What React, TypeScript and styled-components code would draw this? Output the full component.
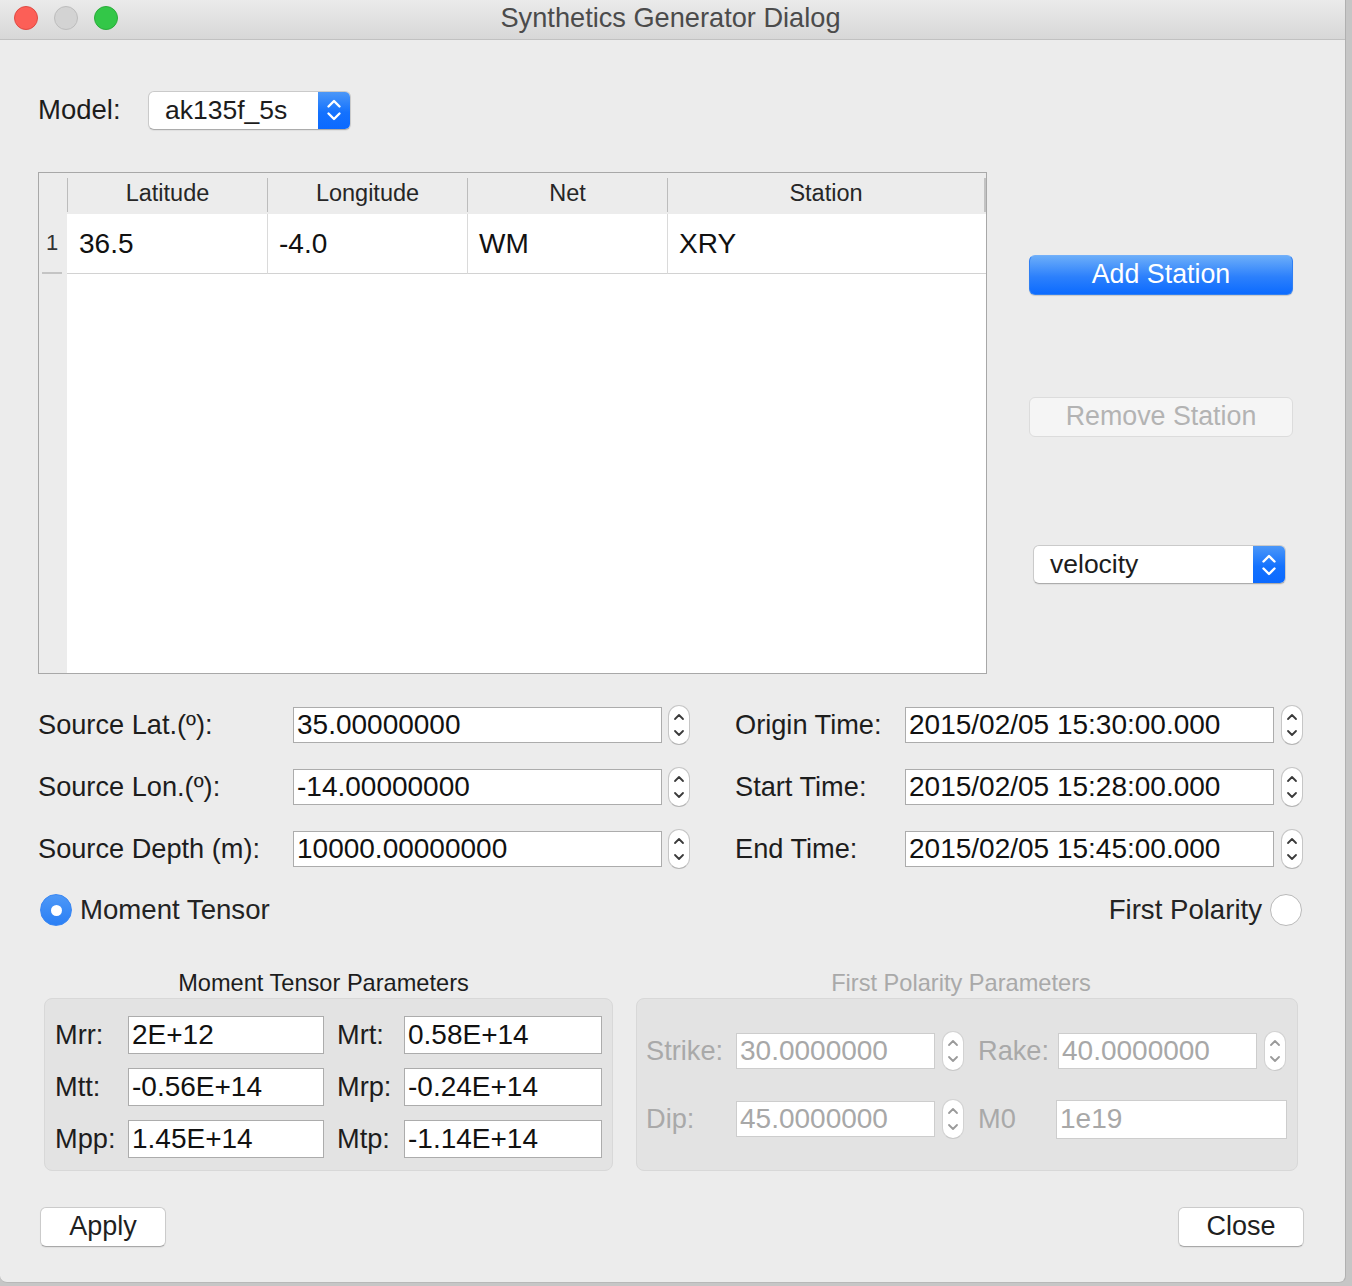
import React from "react";
import styled, { createGlobalStyle } from "styled-components";

const FONT = `"Liberation Sans", Arial, Helvetica, sans-serif`;

const GlobalStyle = createGlobalStyle`
  html, body { margin: 0; padding: 0; }
  body {
    width: 1352px;
    height: 1286px;
    overflow: hidden;
    background: #c8c8c8;
    font-family: ${FONT};
  }
  * { box-sizing: border-box; }
`;

const Screen = styled.div`
  width: 1352px;
  height: 1286px;
  display: flex;
  align-items: flex-start;
  background: #c6c6c6;
`;

const Window = styled.div`
  width: 1346px;
  height: 1283px;
  background: #ececec;
  border-right: 1px solid #b0b0b0;
  border-bottom: 1px solid #b8b8b8;
  border-radius: 0 0 7px 7px;
  display: flex;
  flex-direction: column;
  overflow: hidden;
`;

const TitleBar = styled.div`
  height: 40px;
  flex: none;
  display: grid;
  grid-template-columns: 1fr auto 1fr;
  align-items: center;
  background: linear-gradient(#ebebeb, #d7d7d7);
  border-bottom: 1px solid #c1c1c1;
`;

const Lights = styled.div`
  display: flex;
  gap: 16px;
  padding-left: 14px;
  padding-bottom: 4px;
`;

const Light = styled.span<{ $fill: string; $edge: string }>`
  width: 24px;
  height: 24px;
  border-radius: 50%;
  background: ${(p) => p.$fill};
  border: 1px solid ${(p) => p.$edge};
`;

const Title = styled.div`
  font-size: 27.2px;
  color: #4b4b4b;
  padding-bottom: 3px;
  padding-right: 4px;
`;

const Body = styled.div`
  flex: 1;
  display: flex;
  flex-direction: column;
  padding: 51px 0 0 38px;
`;

const ModelRow = styled.div`
  display: flex;
  align-items: center;
  height: 38px;
`;

const ModelLabel = styled.span`
  width: 110px;
  font-size: 27.5px;
  color: #1c1c1c;
`;

const Combo = styled.div<{ $width: number; $mt?: number; $ml?: number }>`
  width: ${(p) => p.$width}px;
  height: 39px;
  margin-top: ${(p) => p.$mt ?? 0}px;
  margin-left: ${(p) => p.$ml ?? 0}px;
  display: flex;
  border-radius: 6px;
  background: #fff;
  border: 1px solid #cacaca;
  border-bottom-color: #acacac;
  box-shadow: 0 1px 1px rgba(0, 0, 0, 0.06);
  overflow: hidden;
`;

const ComboText = styled.span`
  flex: 1;
  display: flex;
  align-items: center;
  padding-left: 16px;
  font-size: 26.5px;
  color: #1c1c1c;
`;

const ComboArrow = styled.span`
  width: 32px;
  display: flex;
  align-items: center;
  justify-content: center;
  background: linear-gradient(#4b97f8, #1472fe 55%, #0b69ff);
`;

const StationSection = styled.div`
  display: flex;
  gap: 42px;
  margin-top: 43px;
`;

const COLS = "28px 200px 200px 200px 1fr";

const Table = styled.div`
  width: 949px;
  height: 502px;
  border: 1px solid #a8a8a8;
  display: flex;
  flex-direction: column;
  background: #ececec;
`;

const HeaderRow = styled.div`
  display: grid;
  grid-template-columns: ${COLS};
  height: 41px;
  background: #ececec;
`;

const HeaderCell = styled.div<{ $sep?: boolean; $last?: boolean }>`
  display: flex;
  align-items: center;
  justify-content: center;
  margin: 5px 0 2px;
  font-size: 23.5px;
  color: #262626;
  border-left: ${(p) => (p.$sep ? "1.5px solid #bcbcbc" : "none")};
  border-right: ${(p) => (p.$last ? "2px solid #c2c2c2" : "none")};
  padding-bottom: 3px;
`;

const DataRow = styled.div`
  display: grid;
  grid-template-columns: ${COLS};
  height: 60px;
  background: #ececec;
`;

const RowHeaderCell = styled.div`
  margin: 0 5px 0 3px;
  display: flex;
  align-items: center;
  justify-content: center;
  font-size: 22px;
  color: #333;
  border-bottom: 2px solid #c4c4c4;
`;

const DataCell = styled.div<{ $first?: boolean }>`
  background: #fff;
  display: flex;
  align-items: center;
  padding-left: ${(p) => (p.$first ? 12 : 11)}px;
  font-size: 28px;
  color: #111;
  border-left: ${(p) => (p.$first ? "none" : "1px solid #dadada")};
  border-bottom: 1px solid #d2d2d2;
`;

const Filler = styled.div`
  flex: 1;
  display: grid;
  grid-template-columns: 28px 1fr;
`;

const FillerGutter = styled.div`
  background: #ececec;
`;

const FillerArea = styled.div`
  background: #fff;
`;

const SideColumn = styled.div`
  display: flex;
  flex-direction: column;
  align-items: flex-start;
  padding-top: 83px;
`;

const PrimaryButton = styled.button`
  width: 264px;
  height: 40px;
  border-radius: 6px;
  border: 1px solid #2f7ff3;
  border-top-color: #73b0fa;
  background: linear-gradient(#6badf9, #2c80fc 55%, #0c6bff);
  color: #fff;
  font-family: ${FONT};
  font-size: 26.8px;
  padding: 0 0 2px;
  box-shadow: 0 1px 1px rgba(0, 0, 0, 0.15);
`;

const DisabledButton = styled.button`
  width: 264px;
  height: 40px;
  margin-top: 102px;
  border-radius: 6px;
  border: 1px solid #dcdcdc;
  background: #f5f5f5;
  color: #b3b3b3;
  font-family: ${FONT};
  font-size: 26.8px;
  padding: 0 0 2px;
`;

const FormSection = styled.div`
  display: flex;
  gap: 45px;
  margin-top: 31px;
`;

const FieldGrid = styled.div<{ $labelWidth: number }>`
  display: grid;
  grid-template-columns: ${(p) => p.$labelWidth}px auto;
  row-gap: 22px;
  align-items: center;
`;

const FieldLabel = styled.span<{ $disabled?: boolean; $indent?: number }>`
  font-size: 27.2px;
  color: ${(p) => (p.$disabled ? "#a9a9a9" : "#1d1d1d")};
  padding-left: ${(p) => p.$indent ?? 0}px;
  white-space: nowrap;
`;

const SpinField = styled.div<{ $gap: number }>`
  display: flex;
  align-items: center;
  gap: ${(p) => p.$gap}px;
`;

const TextInput = styled.input<{ $width: number; $height?: number; $disabled?: boolean }>`
  width: ${(p) => p.$width}px;
  height: ${(p) => p.$height ?? 36}px;
  border: 1px solid ${(p) => (p.$disabled ? "#cdcdcd" : "#acacac")};
  background: #fff;
  border-radius: 0;
  padding: 0 3px;
  font-family: ${FONT};
  font-size: 28px;
  color: ${(p) => (p.$disabled ? "#a8a8a8" : "#111")};
  outline: none;
`;

const SpinnerBox = styled.span<{ $disabled?: boolean }>`
  width: 22px;
  height: 40px;
  flex: none;
  display: flex;
  justify-content: center;
  border-radius: 11px;
  background: #fff;
  border: 1px solid ${(p) => (p.$disabled ? "#d2d2d2" : "#c6c6c6")};
  border-bottom-color: ${(p) => (p.$disabled ? "#c8c8c8" : "#b4b4b4")};
`;

const RadioRow = styled.div`
  width: 1266px;
  display: flex;
  justify-content: space-between;
  align-items: center;
  margin-top: 25px;
  padding: 0 2px;
`;

const RadioOption = styled.label`
  display: flex;
  align-items: center;
  gap: 8px;
  font-size: 27.6px;
  color: #232323;
`;

const RadioDot = styled.span<{ $checked?: boolean }>`
  width: 32px;
  height: 32px;
  border-radius: 50%;
  display: flex;
  align-items: center;
  justify-content: center;
  background: ${(p) => (p.$checked ? "linear-gradient(#4d98f7, #2a7ff5)" : "#fff")};
  border: 1px solid ${(p) => (p.$checked ? "#3a87f3" : "#b9b9b9")};
`;

const RadioInner = styled.span`
  width: 11px;
  height: 11px;
  border-radius: 50%;
  background: #fff;
`;

const GroupsRow = styled.div`
  display: flex;
  gap: 23px;
  margin-top: 45px;
  padding-left: 6px;
`;

const Group = styled.div<{ $width: number }>`
  width: ${(p) => p.$width}px;
  display: flex;
  flex-direction: column;
  gap: 3px;
`;

const GroupTitle = styled.div<{ $disabled?: boolean }>`
  height: 24px;
  line-height: 24px;
  text-align: center;
  font-size: 23.6px;
  color: ${(p) => (p.$disabled ? "#a9a9a9" : "#1d1d1d")};
  padding-right: ${(p) => (p.$disabled ? 12 : 10)}px;
  white-space: nowrap;
`;

const GroupBox = styled.div`
  height: 173px;
  background: #e3e3e3;
  border: 1px solid #d8d8d8;
  border-radius: 8px;
`;

const MomentGrid = styled(GroupBox)`
  display: grid;
  grid-template-columns: 73px 196px 80px 198px;
  grid-auto-rows: 38px;
  row-gap: 14px;
  align-items: center;
  padding: 17px 10px 0;
`;

const PolarityGrid = styled(GroupBox)`
  display: grid;
  grid-template-columns: 90px 228px 94px 230px;
  grid-auto-rows: 40px;
  row-gap: 28px;
  align-items: center;
  padding: 32px 9px 0;
`;

const ButtonsRow = styled.div`
  width: 1266px;
  display: flex;
  justify-content: space-between;
  margin-top: 36px;
  padding-left: 2px;
`;

const PushButton = styled.button`
  width: 126px;
  height: 40px;
  border-radius: 6px;
  background: #fff;
  border: 1px solid #cbcbcb;
  border-bottom-color: #a9a9a9;
  box-shadow: 0 1px 1px rgba(0, 0, 0, 0.06);
  font-family: ${FONT};
  font-size: 27px;
  color: #1f1f1f;
  padding: 0 0 2px;
`;

const ComboChevrons = () => (
  <svg width="32" height="38" viewBox="0 0 32 38" fill="none">
    <path d="M10.5 15.5 L16 10 L21.5 15.5" stroke="#fff" strokeWidth="2.4" strokeLinecap="round" strokeLinejoin="round" />
    <path d="M10.5 22.5 L16 28 L21.5 22.5" stroke="#fff" strokeWidth="2.4" strokeLinecap="round" strokeLinejoin="round" />
  </svg>
);

const Spinner = ({ disabled }: { disabled?: boolean }) => (
  <SpinnerBox $disabled={disabled}>
    <svg width="20" height="38" viewBox="0 0 20 38" fill="none">
      <path
        d="M6 13 L10 9 L14 13"
        stroke={disabled ? "#9a9a9a" : "#3a3a3a"}
        strokeWidth="1.8"
        strokeLinecap="round"
        strokeLinejoin="round"
      />
      <path
        d="M6 25 L10 29 L14 25"
        stroke={disabled ? "#9a9a9a" : "#3a3a3a"}
        strokeWidth="1.8"
        strokeLinecap="round"
        strokeLinejoin="round"
      />
    </svg>
  </SpinnerBox>
);

const SpinInput = ({
  value,
  width,
  gap = 6,
  disabled,
}: {
  value: string;
  width: number;
  gap?: number;
  disabled?: boolean;
}) => (
  <SpinField $gap={gap}>
    <TextInput readOnly value={value} $width={width} $disabled={disabled} />
    <Spinner disabled={disabled} />
  </SpinField>
);

const sourceFields = [
  ["Source Lat.(º):", "35.00000000"],
  ["Source Lon.(º):", "-14.00000000"],
  ["Source Depth (m):", "10000.00000000"],
];

const timeFields = [
  ["Origin Time:", "2015/02/05 15:30:00.000"],
  ["Start Time:", "2015/02/05 15:28:00.000"],
  ["End Time:", "2015/02/05 15:45:00.000"],
];

const moment = [
  ["Mrr:", "2E+12", "Mrt:", "0.58E+14"],
  ["Mtt:", "-0.56E+14", "Mrp:", "-0.24E+14"],
  ["Mpp:", "1.45E+14", "Mtp:", "-1.14E+14"],
];

export default function App() {
  return (
    <>
      <GlobalStyle />
      <Screen>
        <Window>
          <TitleBar>
            <Lights>
              <Light $fill="#fc5f57" $edge="#df4a43" />
              <Light $fill="#d3d3d3" $edge="#bdbdbd" />
              <Light $fill="#33c748" $edge="#2aac3a" />
            </Lights>
            <Title>Synthetics Generator Dialog</Title>
            <span />
          </TitleBar>
          <Body>
            <ModelRow>
              <ModelLabel>Model:</ModelLabel>
              <Combo $width={203}>
                <ComboText>ak135f_5s</ComboText>
                <ComboArrow>
                  <ComboChevrons />
                </ComboArrow>
              </Combo>
            </ModelRow>

            <StationSection>
              <Table>
                <HeaderRow>
                  <HeaderCell />
                  <HeaderCell $sep>Latitude</HeaderCell>
                  <HeaderCell $sep>Longitude</HeaderCell>
                  <HeaderCell $sep>Net</HeaderCell>
                  <HeaderCell $sep $last>
                    Station
                  </HeaderCell>
                </HeaderRow>
                <DataRow>
                  <RowHeaderCell>1</RowHeaderCell>
                  <DataCell $first>36.5</DataCell>
                  <DataCell>-4.0</DataCell>
                  <DataCell>WM</DataCell>
                  <DataCell>XRY</DataCell>
                </DataRow>
                <Filler>
                  <FillerGutter />
                  <FillerArea />
                </Filler>
              </Table>
              <SideColumn>
                <PrimaryButton>Add Station</PrimaryButton>
                <DisabledButton disabled>Remove Station</DisabledButton>
                <Combo $width={253} $mt={108} $ml={4}>
                  <ComboText>velocity</ComboText>
                  <ComboArrow>
                    <ComboChevrons />
                  </ComboArrow>
                </Combo>
              </SideColumn>
            </StationSection>

            <FormSection>
              <FieldGrid $labelWidth={255}>
                {sourceFields.map(([label, value]) => (
                  <React.Fragment key={label}>
                    <FieldLabel>{label}</FieldLabel>
                    <SpinInput value={value} width={369} gap={6} />
                  </React.Fragment>
                ))}
              </FieldGrid>
              <FieldGrid $labelWidth={170}>
                {timeFields.map(([label, value]) => (
                  <React.Fragment key={label}>
                    <FieldLabel>{label}</FieldLabel>
                    <SpinInput value={value} width={369} gap={7} />
                  </React.Fragment>
                ))}
              </FieldGrid>
            </FormSection>

            <RadioRow>
              <RadioOption>
                <RadioDot $checked>
                  <RadioInner />
                </RadioDot>
                Moment Tensor
              </RadioOption>
              <RadioOption>
                First Polarity
                <RadioDot />
              </RadioOption>
            </RadioRow>

            <GroupsRow>
              <Group $width={569}>
                <GroupTitle>Moment Tensor Parameters</GroupTitle>
                <MomentGrid>
                  {moment.map(([l1, v1, l2, v2]) => (
                    <React.Fragment key={l1}>
                      <FieldLabel>{l1}</FieldLabel>
                      <TextInput readOnly value={v1} $width={196} $height={38} />
                      <FieldLabel $indent={13}>{l2}</FieldLabel>
                      <TextInput readOnly value={v2} $width={198} $height={38} />
                    </React.Fragment>
                  ))}
                </MomentGrid>
              </Group>
              <Group $width={662}>
                <GroupTitle $disabled>First Polarity Parameters</GroupTitle>
                <PolarityGrid>
                  <FieldLabel $disabled>Strike:</FieldLabel>
                  <SpinInput value="30.0000000" width={199} gap={7} disabled />
                  <FieldLabel $disabled $indent={14}>
                    Rake:
                  </FieldLabel>
                  <SpinInput value="40.0000000" width={199} gap={7} disabled />
                  <FieldLabel $disabled>Dip:</FieldLabel>
                  <SpinInput value="45.0000000" width={199} gap={7} disabled />
                  <FieldLabel $disabled $indent={14}>
                    M0
                  </FieldLabel>
                  <TextInput readOnly value="1e19" $width={231} $height={39} $disabled style={{ marginLeft: -2 }} />
                </PolarityGrid>
              </Group>
            </GroupsRow>

            <ButtonsRow>
              <PushButton>Apply</PushButton>
              <PushButton>Close</PushButton>
            </ButtonsRow>
          </Body>
        </Window>
      </Screen>
    </>
  );
}
